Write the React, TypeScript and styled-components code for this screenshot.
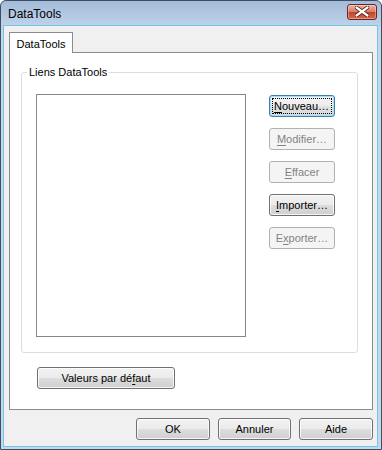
import React from 'react';
import styled, { createGlobalStyle, css } from 'styled-components';

const Global = createGlobalStyle`
  html, body { margin: 0; padding: 0; background: #ffffff; }
  body { font-family: "Liberation Sans", Arial, sans-serif; font-size: 11px; color: #000; }
`;

const Window = styled.div`
  width: 382px;
  height: 450px;
  box-sizing: border-box;
  display: flex;
  flex-direction: column;
  border: 1px solid #3f4d5e;
  border-radius: 6px 6px 0 0;
  background: linear-gradient(#a3bcd9, #c4d7ed 30px, #c4d7ed);
  overflow: hidden;
`;

const TitleBar = styled.div`
  height: 24px;
  flex: none;
  display: flex;
  align-items: center;
  justify-content: space-between;
  padding: 0 4px 0 7px;
`;

const Title = styled.span`
  font-size: 12px;
  color: #000;
  padding-top: 1px;
`;

const CloseBtn = styled.div`
  width: 30px;
  height: 16px;
  margin-top: -3px;
  box-sizing: border-box;
  border: 1px solid #6d2419;
  border-radius: 3px;
  background: linear-gradient(#eab2a4, #d47b68 50%, #c0432b 51%, #d66a4f);
  box-shadow: inset 0 0 0 1px rgba(255, 255, 255, 0.35);
  display: flex;
  align-items: center;
  justify-content: center;
`;

const Client = styled.div`
  flex: 1;
  margin: 0 3px 2px 2px;
  border: 1px solid #6fc6ea;
  background: #f0f0f0;
  display: flex;
  flex-direction: column;
  padding: 6px 4px 0 5px;
`;

const TabStrip = styled.div`
  display: flex;
  height: 21px;
  margin-bottom: -1px;
  position: relative;
  z-index: 1;
`;

const Tab = styled.div`
  width: 64px;
  box-sizing: border-box;
  border: 1px solid #898c95;
  border-bottom: none;
  background: #ffffff;
  display: flex;
  align-items: center;
  justify-content: center;
  padding-top: 1px;
`;

const TabPanel = styled.div`
  height: 358px;
  box-sizing: border-box;
  border: 1px solid #898c95;
  background: #ffffff;
  padding: 13px 14px 0 11px;
  display: flex;
  flex-direction: column;
`;

const Group = styled.fieldset`
  margin: 0;
  padding: 16px 0 0 14px;
  height: 287px;
  box-sizing: border-box;
  border: 1px solid #d5dfe5;
  border-radius: 3px;
  display: flex;
  flex-direction: row;
  gap: 23px;
  align-items: flex-start;
  min-width: 0;
`;

const Legend = styled.legend`
  padding: 0 2px;
  margin-left: -9px;
  color: #000;
`;

const ListBox = styled.div`
  width: 210px;
  height: 243px;
  box-sizing: border-box;
  border: 1px solid #828790;
  background: #ffffff;
`;

const ButtonCol = styled.div`
  display: flex;
  flex-direction: column;
  gap: 11px;
  padding-top: 1px;
`;

type BtnKind = 'normal' | 'disabled' | 'default';

const Button = styled.div<{ $kind?: BtnKind; $w: number }>`
  width: ${p => p.$w}px;
  height: 22px;
  box-sizing: border-box;
  border: 1px solid #707070;
  border-radius: 3px;
  background: linear-gradient(#f2f2f2, #ebebeb 50%, #dddddd 51%, #cfcfcf);
  box-shadow: inset 0 0 0 1px rgba(255, 255, 255, 0.8);
  display: flex;
  align-items: center;
  justify-content: center;
  color: #000;
  ${p => p.$kind === 'disabled' && css`
    border-color: #adb2b5;
    background: #f4f4f4;
    box-shadow: none;
    color: #838383;
  `}
  ${p => p.$kind === 'default' && css`
    border-color: #3c7fb1;
    box-shadow: inset 0 0 0 1px #a6e0f8;
    background: linear-gradient(#f4f4f4, #ededed 50%, #e2e2e2 51%, #d8d8d8);
  `}
`;

const Focus = styled.span`
  border: 1px dotted #000;
  padding: 1px 2px 1px 1px;
  margin: 0 -3px;
`;

const Acc = styled.span`
  text-decoration: underline;
  text-underline-offset: 2px;
`;

const DefaultsRow = styled.div`
  padding: 14px 0 0 16px;
`;

const Footer = styled.div`
  display: flex;
  justify-content: flex-end;
  gap: 8px;
  padding: 8px 0 0 0;
`;

function CloseIcon() {
  return (
    <svg width="14" height="11" viewBox="0 0 14 11">
      <path
        d="M1.5 1.5 L12.5 9.5 M12.5 1.5 L1.5 9.5"
        stroke="#4a1a12"
        strokeWidth="4"
        strokeLinecap="round"
      />
      <path
        d="M1.5 1.5 L12.5 9.5 M12.5 1.5 L1.5 9.5"
        stroke="#ffffff"
        strokeWidth="2.2"
        strokeLinecap="round"
      />
    </svg>
  );
}

export default function App() {
  return (
    <>
      <Global />
      <Window>
        <TitleBar>
          <Title>DataTools</Title>
          <CloseBtn>
            <CloseIcon />
          </CloseBtn>
        </TitleBar>
        <Client>
          <TabStrip>
            <Tab>DataTools</Tab>
          </TabStrip>
          <TabPanel>
            <Group>
              <Legend>Liens DataTools</Legend>
              <ListBox />
              <ButtonCol>
                <Button $kind="default" $w={66}>
                  <Focus><Acc>N</Acc>ouveau…</Focus>
                </Button>
                <Button $kind="disabled" $w={66}><Acc>M</Acc>odifier…</Button>
                <Button $kind="disabled" $w={66}><Acc>E</Acc>ffacer</Button>
                <Button $w={66}><Acc>I</Acc>mporter…</Button>
                <Button $kind="disabled" $w={66}>E<Acc>x</Acc>porter…</Button>
              </ButtonCol>
            </Group>
            <DefaultsRow>
              <Button $w={138}>Valeurs par dé<Acc>f</Acc>aut</Button>
            </DefaultsRow>
          </TabPanel>
          <Footer>
            <Button $w={74}>OK</Button>
            <Button $w={73}>Annuler</Button>
            <Button $w={74}>Aide</Button>
          </Footer>
        </Client>
      </Window>
    </>
  );
}
